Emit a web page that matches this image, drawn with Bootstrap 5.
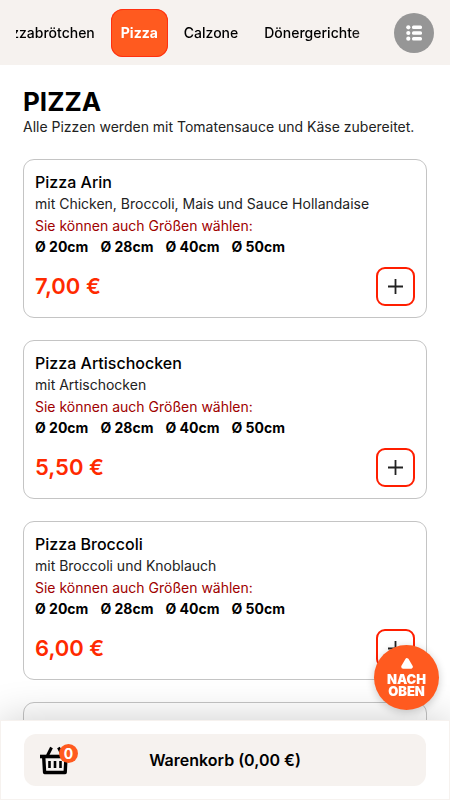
<!DOCTYPE html>
<html lang="de">
<head>
<meta charset="utf-8">
<meta name="viewport" content="width=device-width, initial-scale=1">
<title>Pizza – Speisekarte</title>
<link href="https://cdn.jsdelivr.net/npm/bootstrap@5.3.0/dist/css/bootstrap.min.css" rel="stylesheet">
<style>
body { font-family: Inter, "Liberation Sans", sans-serif; color: #000; background: #fff; }
.menu-bar { background: #f6f2ef; height: 65px; padding: 0 16px; }
.cat-strip { gap: 6px; overflow: hidden; min-width: 0; margin-right: 24px; -webkit-mask-image: linear-gradient(to left, #0009, #000 20px); mask-image: linear-gradient(to left, #0009, #000 20px); }
.cat-strip .nav-link { color: #000; font-size: 14px; font-weight: 500; line-height: 48px; height: 48px; padding: 0 10px; white-space: nowrap; border-radius: 12px; }
.cat-strip .nav-link.active { background: #ff5a1f; box-shadow: inset 0 0 0 1px #ff3010; color: #fff; font-weight: 700; }
.list-btn { width: 40px; height: 40px; background: #969696; }
.menu-page { padding: 22px 23px 110px; }
.menu-title { font-size: 26px; line-height: 30px; font-weight: 700; }
.body-text { font-size: 14px; line-height: 20px; font-weight: 400; color: #222; }
.dish { border: 1px solid #c4c4c4; border-radius: 11px; padding: 11px 11px 11px; }
.dish-list { gap: 22px; margin-top: 22px; }
.dish-name { font-size: 16px; line-height: 23px; font-weight: 500; }
.size-hint { font-size: 14px; line-height: 24px; color: #a00000; }
.size-list { font-size: 14px; line-height: 18px; font-weight: 700; gap: 12px; }
.dish-foot { margin-top: 10px; }
.dish-price { font-size: 22px; line-height: 40px; font-weight: 600; color: #ff2a00; }
.add-btn { width: 39px; height: 39px; border: 2px solid #ff1e00; border-radius: 9px; background: #fff; }
.up-btn { position: fixed; right: 11px; bottom: 90px; width: 65px; height: 65px; background: #ff5a1f; color: #fff; font-size: 13px; line-height: 12px; font-weight: 900; z-index: 1040; box-shadow: 0 2px 8px #0003; }
.cart-bar { background: #fff; border: 1px solid #f6f2ef; padding: 13px 23px; box-shadow: 0 0 40px #0003; }
.cart-btn { height: 52px; background: #f6f2ef; border-radius: 12px; font-size: 16px; font-weight: 600; color: #000; }
.cart-icon { left: 16px; top: 8px; width: 40px; height: 36px; }
.cart-count { left: 19px; top: 2px; width: 19px; height: 19px; background: #ff5a1f; color: #fff; font-size: 14px; line-height: 19px; font-weight: 700; }
</style>
<script src="https://cdn.jsdelivr.net/npm/bootstrap@5.3.0/dist/js/bootstrap.bundle.min.js"></script>
</head>
<body>
<header class="menu-bar sticky-top d-flex align-items-center">
  <nav class="cat-strip nav flex-nowrap flex-grow-1 justify-content-end" aria-label="Kategorien">
    <a class="nav-link" href="#pizzabroetchen">Pizzabrötchen</a>
    <a class="nav-link active" href="#pizza" aria-current="true">Pizza</a>
    <a class="nav-link" href="#calzone">Calzone</a>
    <a class="nav-link" href="#doener">Dönergerichte</a>
  </nav>
  <button type="button" class="list-btn btn border-0 rounded-circle p-0 flex-shrink-0 d-flex align-items-center justify-content-center" aria-label="Alle Kategorien">
    <svg width="16" height="16" viewBox="0 0 16 16" fill="#fff"><circle cx="2.3" cy="2.3" r="2.1"/><circle cx="2.3" cy="8" r="2.1"/><circle cx="2.3" cy="13.7" r="2.1"/><rect x="6" y=".6" width="10" height="3.4" rx="1.5"/><rect x="6" y="6.3" width="10" height="3.4" rx="1.5"/><rect x="6" y="12" width="10" height="3.4" rx="1.5"/></svg>
  </button>
</header>

<main class="menu-page" id="pizza">
  <h1 class="menu-title m-0">PIZZA</h1>
  <p class="body-text m-0">Alle Pizzen werden mit Tomatensauce und Käse zubereitet.</p>
  <div class="dish-list d-flex flex-column">
    <article class="dish">
      <h2 class="dish-name m-0">Pizza Arin</h2>
      <p class="body-text m-0">mit Chicken, Broccoli, Mais und Sauce Hollandaise</p>
      <div class="size-hint">Sie können auch Größen wählen:</div>
      <div class="size-list d-flex"><span>Ø 20cm</span><span>Ø 28cm</span><span>Ø 40cm</span><span>Ø 50cm</span></div>
      <div class="dish-foot d-flex justify-content-between align-items-center">
        <span class="dish-price">7,00 €</span>
        <button type="button" class="add-btn btn p-0 d-flex align-items-center justify-content-center" aria-label="Pizza Arin hinzufügen"><svg width="15" height="15" viewBox="0 0 15 15" stroke="#222" stroke-width="1.8"><path d="M7.5 0v15M0 7.5h15"/></svg></button>
      </div>
    </article>
    <article class="dish">
      <h2 class="dish-name m-0">Pizza Artischocken</h2>
      <p class="body-text m-0">mit Artischocken</p>
      <div class="size-hint">Sie können auch Größen wählen:</div>
      <div class="size-list d-flex"><span>Ø 20cm</span><span>Ø 28cm</span><span>Ø 40cm</span><span>Ø 50cm</span></div>
      <div class="dish-foot d-flex justify-content-between align-items-center">
        <span class="dish-price">5,50 €</span>
        <button type="button" class="add-btn btn p-0 d-flex align-items-center justify-content-center" aria-label="Pizza Artischocken hinzufügen"><svg width="15" height="15" viewBox="0 0 15 15" stroke="#222" stroke-width="1.8"><path d="M7.5 0v15M0 7.5h15"/></svg></button>
      </div>
    </article>
    <article class="dish">
      <h2 class="dish-name m-0">Pizza Broccoli</h2>
      <p class="body-text m-0">mit Broccoli und Knoblauch</p>
      <div class="size-hint">Sie können auch Größen wählen:</div>
      <div class="size-list d-flex"><span>Ø 20cm</span><span>Ø 28cm</span><span>Ø 40cm</span><span>Ø 50cm</span></div>
      <div class="dish-foot d-flex justify-content-between align-items-center">
        <span class="dish-price">6,00 €</span>
        <button type="button" class="add-btn btn p-0 d-flex align-items-center justify-content-center" aria-label="Pizza Broccoli hinzufügen"><svg width="15" height="15" viewBox="0 0 15 15" stroke="#222" stroke-width="1.8"><path d="M7.5 0v15M0 7.5h15"/></svg></button>
      </div>
    </article>
    <article class="dish">
      <h2 class="dish-name m-0 pt-1">Pizza</h2>
    </article>
  </div>
</main>

<button type="button" class="up-btn btn border-0 rounded-circle p-0 d-flex flex-column align-items-center justify-content-center">
  <svg class="mb-1" width="12" height="11" viewBox="0 0 12 11" fill="#fff" stroke="#fff" stroke-width="4" stroke-linejoin="round"><path d="M6 2.2 9.8 8.8H2.2Z"/></svg>
  <span>NACH<br>OBEN</span>
</button>

<footer class="cart-bar fixed-bottom">
  <button type="button" class="cart-btn btn border-0 w-100 position-relative">
    <span class="cart-icon position-absolute">
      <svg class="d-block" width="30" height="34" viewBox="0 0 30 34" fill="none" stroke="#000"><path d="M7.5 13.5 11.5 5.5M22.5 13.5 18.5 5.5" stroke-width="3"/><path d="M0 14.5h29" stroke-width="3.6"/><path d="M3.7 15 4.6 30.5H25.2L26 15" stroke-width="3.4" stroke-linejoin="round"/><path d="M9.5 19v7M15 19v7M20.5 19v7" stroke-width="2.6"/></svg>
      <span class="cart-count position-absolute rounded-circle text-center">0</span>
    </span>
    Warenkorb (0,00 €)
  </button>
</footer>
</body>
</html>
